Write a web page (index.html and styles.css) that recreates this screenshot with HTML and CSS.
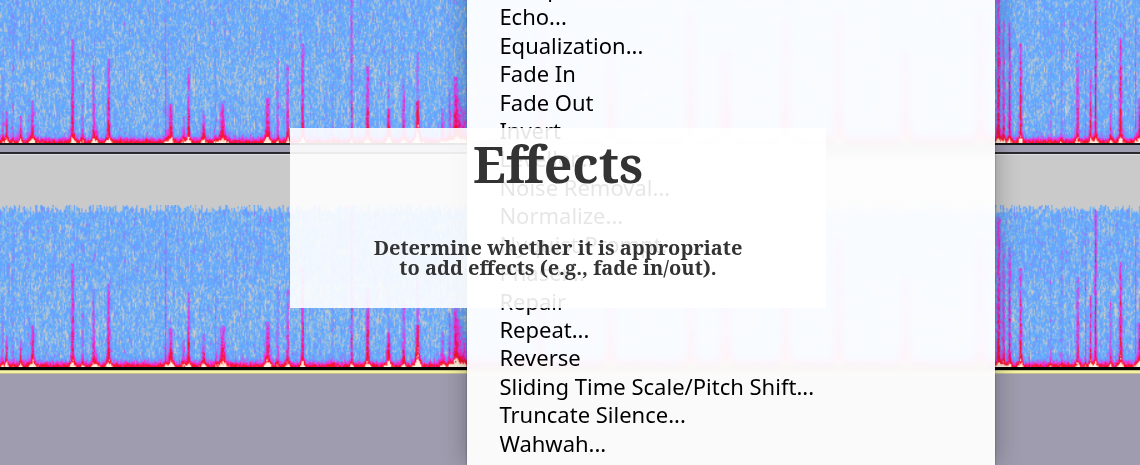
FILE: index.html
```html
<!DOCTYPE html>
<html lang="en">
<head>
    <meta charset="UTF-8">
    <meta name="viewport" content="width=device-width, initial-scale=1.0">
    <title>Effects</title>
    <link rel="stylesheet" href="styles.css">
</head>
<body>
    <main class="slide">
        <div class="tracks" aria-hidden="true">
            <div class="track track-top">
                <canvas class="spectrogram" width="912" height="95"></canvas>
            </div>
            <div class="divider"></div>
            <div class="track track-bottom">
                <canvas class="spectrogram ragged" width="912" height="108"></canvas>
            </div>
        </div>
        <ul class="menu">
            <li><button type="button">Compressor...</button></li>
            <li><button type="button">Echo...</button></li>
            <li><button type="button">Equalization...</button></li>
            <li><button type="button">Fade In</button></li>
            <li><button type="button">Fade Out</button></li>
            <li><button type="button">Invert</button></li>
            <li><button type="button">Leveller...</button></li>
            <li><button type="button">Noise Removal...</button></li>
            <li><button type="button">Normalize...</button></li>
            <li><button type="button">Nyquist Prompt...</button></li>
            <li><button type="button">Phaser...</button></li>
            <li><button type="button">Repair</button></li>
            <li><button type="button">Repeat...</button></li>
            <li><button type="button">Reverse</button></li>
            <li><button type="button">Sliding Time Scale/Pitch Shift...</button></li>
            <li><button type="button">Truncate Silence...</button></li>
            <li><button type="button">Wahwah...</button></li>
        </ul>
        <section class="caption">
            <h1>Effects</h1>
            <p>Determine whether it is appropriate<br>to add effects (e.g., fade in/out).</p>
        </section>
    </main>
    <script src="spectrogram.js"></script>
</body>
</html>
```
FILE: styles.css
```css
body {
    margin: 0;
    background-color: #9e9cae;
}

.slide {
    display: grid;
    height: 100vh;
    overflow: hidden;
}

.tracks, .menu, .caption {
    grid-area: 1 / 1;
}

.track {
    background-color: #cacaca;
}

.track-top {
    border-bottom: 2px solid #17171c;
}

.track-bottom {
    padding-top: 50px;
    border-top: 1px solid #e0e0e0;
    border-bottom: 3px solid #000;
    box-shadow: 0 1px 0 #c4c08e, 0 3px 0 #f6f3a0, 0 4px 0 #c4c08e;
}

.spectrogram {
    display: block;
    width: 100%;
    height: 143px;
}

.ragged {
    height: 162px;
}

.divider {
    height: 7px;
    background-color: #a19fb2;
    border-bottom: 2px solid #2a2a2e;
}

.menu {
    display: grid;
    grid-auto-rows: 1fr;
    box-sizing: border-box;
    width: 46.3%;
    margin: -26px 0 0 41%;
    padding: 0 0 8px;
    list-style: none;
    background-color: rgba(255, 255, 255, 0.95);
    box-shadow: 0 0 24px rgba(0, 0, 0, 0.3), 0 0 2px rgba(0, 0, 0, 0.4);
    backdrop-filter: blur(3px);
}

.menu button {
    display: block;
    width: 100%;
    padding: 0 32px;
    border: none;
    background: none;
    color: #000;
    font-family: "Noto Sans", "Open Sans", sans-serif;
    font-size: 22px;
    font-weight: 450;
    line-height: 28px;
    text-align: left;
    cursor: pointer;
}

.caption {
    z-index: 1;
    align-self: start;
    box-sizing: border-box;
    width: 47.1%;
    margin: 128px 0 0 25.4%;
    padding: 6px 0 30px;
    background-color: rgba(255, 255, 255, 0.9);
    color: #333;
    font-family: "Noto Serif", "Droid Serif", "DejaVu Serif", serif;
    font-weight: bold;
    text-align: center;
}

h1 {
    margin: 0 0 44px;
    font-size: 50px;
    line-height: 60px;
}

p {
    margin: 0;
    font-size: 20px;
    line-height: 20px;
}
```
FILE: spectrogram.js
```javascript
// x, height, strength, width (in px of a 1140px wide track)
const spikes = [
    [2, 70, 0.5, 1], [6, 32, 1, 1], [12, 140, 0.25, 1], [20, 28, 0.8, 1], [28, 140, 0.15, 1],
    [32, 42, 1, 1.5], [72, 104, 1, 1.5], [82, 60, 0.5, 1], [93, 78, 0.8, 1.1], [96, 22, 0.5, 1],
    [108, 85, 1, 1.4], [165, 150, 0.45, 0.9], [170, 40, 1, 1.8], [183, 28, 0.6, 1.2], [188, 75, 0.9, 1.3],
    [203, 33, 0.8, 1.5], [215, 95, 0.3, 0.9], [222, 42, 0.9, 2.6], [267, 46, 1, 2], [277, 85, 0.5, 1],
    [287, 78, 0.9, 1.1], [302, 100, 1, 1.3], [332, 100, 0.2, 1], [351, 220, 0.7, 1], [367, 78, 1, 1.6],
    [388, 35, 0.8, 1.8], [388, 80, 0.4, 1], [403, 65, 0.7, 1.4], [417, 90, 0.6, 1.2], [417, 42, 1, 2.2],
    [442, 35, 0.7, 1.6], [449, 55, 0.6, 1.2], [455, 66, 0.9, 2.2], [459, 48, 0.6, 3], [464, 36, 0.5, 2],
    [540, 120, 0.8, 2], [610, 90, 1, 3], [690, 130, 1, 3], [725, 90, 1, 4], [785, 120, 1, 3],
    [838, 130, 1, 3], [905, 90, 1, 3], [980, 130, 0.8, 3],
    [998, 150, 0.9, 1.8], [1003, 125, 0.7, 1.1], [1009, 120, 0.75, 1.3], [1020, 100, 1, 1.3],
    [1050, 120, 0.2, 0.8], [1061, 135, 0.3, 0.9], [1077, 90, 0.8, 1.4], [1085, 140, 0.3, 0.8],
    [1090, 72, 0.9, 1.1], [1095, 160, 1, 1.2], [1110, 70, 0.5, 1.2], [1120, 105, 1, 1.5],
    [1135, 130, 0.4, 0.8], [1139, 46, 1, 1.6]
];

const stops = [
    [0, 208, 204, 198],
    [0.25, 94, 171, 255],
    [0.36, 104, 162, 255],
    [0.62, 228, 62, 232],
    [0.82, 246, 32, 170],
    [0.96, 246, 16, 50],
    [1.35, 250, 30, 40],
    [1.6, 255, 240, 220]
];

let seed = 7;
function random() {
    seed = (seed * 1664525 + 1013904223) % 4294967296;
    return seed / 4294967296;
}

function colour(v) {
    v = Math.max(0, Math.min(1.6, v));
    let i = 1;
    while (i < stops.length - 1 && v > stops[i][0]) {
        i++;
    }
    const a = stops[i - 1];
    const b = stops[i];
    const t = (v - a[0]) / (b[0] - a[0]);
    return [1, 2, 3].map(n => a[n] + (b[n] - a[n]) * t);
}

function draw(canvas) {
    const ctx = canvas.getContext('2d');
    const image = ctx.createImageData(canvas.width, canvas.height);
    const ragged = canvas.classList.contains('ragged');

    for (let x = 0; x < canvas.width; x++) {
        const px = x * 1.25;
        const top = ragged ? Math.floor(random() * 6) : 0;
        const haze = random() * 0.06;
        let noise = 0;
        for (let y = top; y < canvas.height; y++) {
            const h = (canvas.height - y) * 1.5;
            // each cell keeps part of the one above, which gives short vertical streaks
            noise = noise * 0.45 + (random() + random() - 1) * 0.21;
            let v = 0.175 + haze + noise;
            if (h > 85) {
                v += 0.03;
            }
            for (const [sx, height, strength, width] of spikes) {
                const d = Math.abs(px - sx);
                if (h > height || d > width * 5) {
                    continue;
                }
                const flare = width * (1 + 1.2 * Math.exp(-h / 8));
                const fade = 0.42 + 0.48 * (1 - h / height) + 0.4 * Math.exp(-h / 9);
                v += strength * fade * Math.exp(-(d * d) / (flare * flare)) * (0.7 + random() * 0.45);
            }
            v += 0.76 * Math.exp(-Math.pow(h / 5, 2)) + 0.4 * Math.exp(-h / 9) * random();
            const [r, g, b] = colour(v);
            const at = (y * canvas.width + x) * 4;
            image.data[at] = r;
            image.data[at + 1] = g;
            image.data[at + 2] = b;
            image.data[at + 3] = 255;
        }
    }
    ctx.putImageData(image, 0, 0);
}

document.querySelectorAll('.spectrogram').forEach(draw);
```
